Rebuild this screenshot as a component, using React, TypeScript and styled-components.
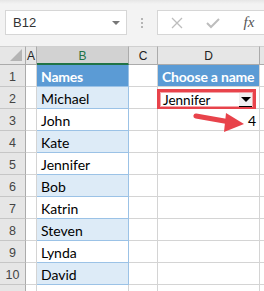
import React from 'react';
import styled, { createGlobalStyle } from 'styled-components';

const GlobalStyle = createGlobalStyle`
	html, body { margin: 0; padding: 0; background: #fff; }
	body { font-family: Lato, "Liberation Sans", sans-serif; overflow: hidden; }
`;

const Page = styled.div`
	width: 264px;
	height: 291px;
	position: relative;
	overflow: hidden;
`;

const Toolbar = styled.div`
	height: 46px;
	background: linear-gradient(#e6e6e6 0px, #f3f3f3 4px, #f3f3f3 100%);
	display: flex;
	align-items: center;
	padding: 0 0 1px 5px;
	box-sizing: border-box;
`;

const NameBox = styled.div`
	flex: 0 0 122px;
	height: 25px;
	box-sizing: border-box;
	background: #fff;
	border: 1px solid #d6d6d6;
	display: flex;
	align-items: center;
	justify-content: space-between;
	padding: 0 6px 0 7px;
	font-family: "Liberation Sans", sans-serif;
	font-size: 13px;
	color: #333;
`;

const Caret = styled.span`
	width: 0;
	height: 0;
	border-left: 4px solid transparent;
	border-right: 4px solid transparent;
	border-top: 4px solid #777;
`;

const Dots = styled.div`
	flex: 0 0 30px;
	display: flex;
	flex-direction: column;
	align-items: center;
	gap: 2px;
	span { width: 2px; height: 2px; background: #b5b5b5; }
`;

const FormulaBox = styled.div`
	flex: 1;
	height: 25px;
	box-sizing: border-box;
	background: #fff;
	border: 1px solid #d6d6d6;
	border-right: none;
	display: flex;
	align-items: center;
	padding-left: 1px;
`;

const FxButton = styled.div`
	flex: 0 0 36px;
	display: flex;
	align-items: center;
	justify-content: center;
	color: #bdbdbd;
`;

const Fx = styled.span`
	font-family: "Liberation Serif", serif;
	font-style: italic;
	font-size: 15px;
	color: #555;
`;

const Sheet = styled.div`
	display: grid;
	grid-template-columns: 26px 11px 92px 29px 102px 1fr;
	grid-template-rows: 19px repeat(11, 22px);
`;

const ColHead = styled.div<{ $selected?: boolean }>`
	background: ${p => (p.$selected ? '#d2d2d2' : '#e6e6e6')};
	border-right: 1px solid #ababab;
	border-bottom: ${p => (p.$selected ? '2px solid #217346' : '1px solid #ababab')};
	border-top: 1px solid #d0d0d0;
	box-sizing: border-box;
	display: flex;
	align-items: center;
	justify-content: center;
	font-family: "Liberation Sans", sans-serif;
	font-size: 12px;
	color: ${p => (p.$selected ? '#217346' : '#222')};
	padding-top: 1px;
`;

const Corner = styled.div`
	background: #e6e6e6;
	border-right: 1px solid #ababab;
	border-bottom: 1px solid #ababab;
	border-top: 1px solid #d0d0d0;
	box-sizing: border-box;
	display: flex;
	align-items: flex-end;
	justify-content: flex-end;
	padding: 0 3px 3px 0;
	&::after {
		content: '';
		width: 0;
		height: 0;
		border-left: 12px solid transparent;
		border-bottom: 12px solid #b4b4b4;
	}
`;

const RowHead = styled.div`
	background: #e6e6e6;
	border-right: 1px solid #ababab;
	border-bottom: 1px solid #c6c6c6;
	box-sizing: border-box;
	display: flex;
	align-items: center;
	justify-content: center;
	font-family: "Liberation Sans", sans-serif;
	font-size: 12.5px;
	color: #444;
	padding-top: 2px;
`;

const Cell = styled.div<{ $fill?: 'head' | 'band' | 'plain'; $table?: boolean; $align?: 'left' | 'right' }>`
	box-sizing: border-box;
	background: ${p => (p.$fill === 'head' ? '#5b9bd5' : p.$fill === 'band' ? '#ddebf7' : '#fff')};
	border-right: 1px solid ${p => (p.$table ? '#9bc2e6' : '#d4d4d4')};
	border-bottom: 1px solid ${p => (p.$table ? '#9bc2e6' : '#d4d4d4')};
	display: flex;
	align-items: center;
	justify-content: ${p => (p.$align === 'right' ? 'flex-end' : 'flex-start')};
	padding: 2px 3px 0 4px;
	font-size: 14px;
	color: ${p => (p.$fill === 'head' ? '#fff' : '#000')};
	font-weight: ${p => (p.$fill === 'head' ? 700 : 400)};
	letter-spacing: ${p => (p.$fill === 'head' ? '-0.2px' : '0')};
	white-space: nowrap;
	overflow: visible;
	position: relative;
`;

const Dropdown = styled.div`
	position: absolute;
	left: -1px;
	top: 2px;
	width: 99px;
	height: 21px;
	box-sizing: border-box;
	border: 3px solid #e8434b;
	background: #fff;
	display: flex;
	align-items: center;
	padding-left: 3px;
	font-size: 13.5px;
	color: #000;
	box-shadow: 0 0 0 1px #f3a5a9 inset;
`;

const DropButton = styled.div`
	margin-left: auto;
	margin-right: 1px;
	width: 13px;
	height: 13px;
	background: #f0f0f0;
	border-bottom: 1px solid #000;
	display: flex;
	align-items: center;
	justify-content: center;
	&::after {
		content: '';
		border-left: 5px solid transparent;
		border-right: 5px solid transparent;
		border-top: 5px solid #000;
	}
`;

const Pointer = styled.svg`
	position: absolute;
	left: 190px;
	top: 110px;
`;

const names = ['Michael', 'John', 'Kate', 'Jennifer', 'Bob', 'Katrin', 'Steven', 'Lynda', 'David'];

export default function App() {
	const rows = Array.from({ length: 11 }, (_, i) => i + 1);
	return (
		<Page>
			<GlobalStyle />
			<Toolbar>
				<NameBox>
					B12
					<Caret />
				</NameBox>
				<Dots><span /><span /><span /></Dots>
				<FormulaBox>
					<FxButton>
						<svg width="12" height="12" viewBox="0 0 12 12">
							<path d="M1 1 L11 11 M11 1 L1 11" stroke="#bdbdbd" strokeWidth="1.3" fill="none" />
						</svg>
					</FxButton>
					<FxButton>
						<svg width="14" height="12" viewBox="0 0 14 12">
							<path d="M1 6 L5 10 L13 2" stroke="#bdbdbd" strokeWidth="2" fill="none" />
						</svg>
					</FxButton>
					<FxButton><Fx>fx</Fx></FxButton>
				</FormulaBox>
			</Toolbar>
			<Sheet>
				<Corner />
				<ColHead>A</ColHead>
				<ColHead $selected>B</ColHead>
				<ColHead>C</ColHead>
				<ColHead>D</ColHead>
				<ColHead />
				{rows.map(r => {
					const name = r === 1 ? 'Names' : names[r - 2];
					const inTable = r <= 10;
					return (
						<React.Fragment key={r}>
							<RowHead>{r <= 10 ? r : ''}</RowHead>
							<Cell />
							<Cell
								$table={inTable}
								$fill={r === 1 ? 'head' : inTable && r % 2 === 0 ? 'band' : 'plain'}
							>
								{name}
							</Cell>
							<Cell />
							<Cell $fill={r === 1 ? 'head' : 'plain'} $align={r === 3 ? 'right' : 'left'}>
								{r === 1 && 'Choose a name'}
								{r === 2 && (
									<Dropdown>
										Jennifer
										<DropButton />
									</Dropdown>
								)}
								{r === 3 && '4'}
							</Cell>
							<Cell />
						</React.Fragment>
					);
				})}
			</Sheet>
			<Pointer width="60" height="30" viewBox="0 0 60 30">
				<path d="M6 6 L40 12" stroke="#e8434b" strokeWidth="5" strokeLinecap="round" fill="none" />
				<path d="M36 3 L54 14 L34 22 Z" fill="#e8434b" />
			</Pointer>
		</Page>
	);
}
